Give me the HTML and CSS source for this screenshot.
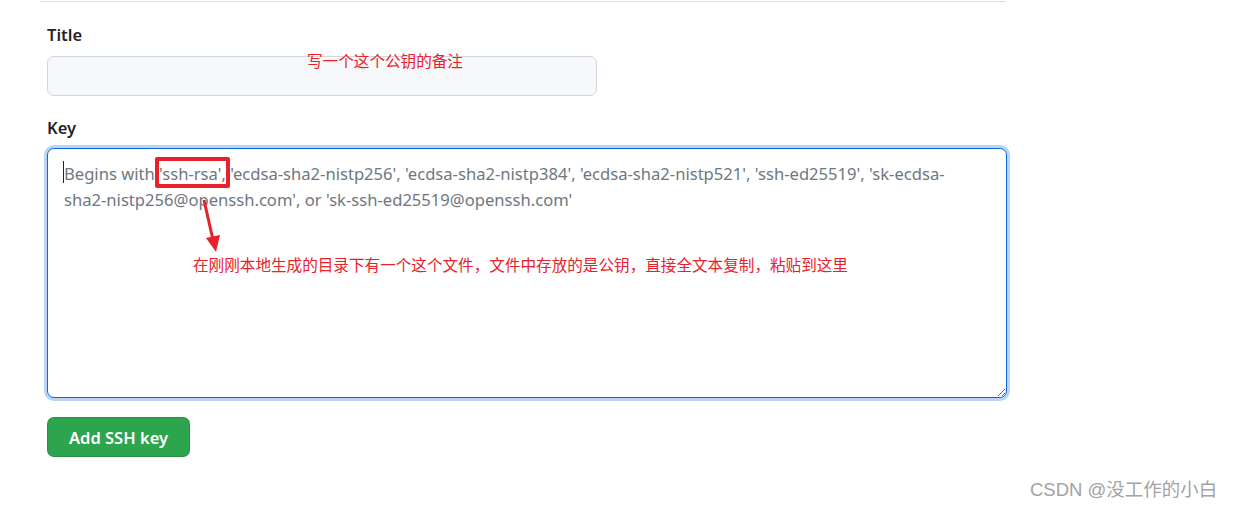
FILE: index.html
```html
<!DOCTYPE html>
<html lang="zh-CN">
<head>
<meta charset="utf-8">
<title>Add SSH key</title>
<link rel="stylesheet" href="styles.css">
</head>
<body>
<div class="wrap">
  <form class="form">
    <div class="group group-title">
      <label class="label" for="title">Title</label>
      <input class="input" id="title" type="text">
      <span class="note note-title">写一个这个公钥的备注</span>
    </div>
    <div class="group group-key">
      <label class="label" for="key">Key</label>
      <div class="area-wrap">
        <textarea class="area" id="key" placeholder="Begins with 'ssh-rsa', 'ecdsa-sha2-nistp256', 'ecdsa-sha2-nistp384', 'ecdsa-sha2-nistp521', 'ssh-ed25519', 'sk-ecdsa-sha2-nistp256@openssh.com', or 'sk-ssh-ed25519@openssh.com'"></textarea>
        <span class="caret"></span>
        <span class="mark-box"></span>
        <svg class="arrow" width="30" height="60" viewBox="0 0 30 60">
          <line x1="6" y1="2" x2="15" y2="42" stroke="#e8212a" stroke-width="3"/>
          <polygon points="8,40 22,37 18,54" fill="#e8212a"/>
        </svg>
        <span class="note note-key">在刚刚本地生成的目录下有一个这个文件，文件中存放的是公钥，直接全文本复制，粘贴到这里</span>
      </div>
    </div>
    <button class="btn" type="button">Add SSH key</button>
  </form>
</div>
<div class="watermark">CSDN @没工作的小白</div>
</body>
</html>
```

FILE: styles.css
```css
html, body {
  margin: 0;
  padding: 0;
  background: #ffffff;
}
body {
  font-family: "Noto Sans", "Liberation Sans", "Noto Sans CJK SC", sans-serif;
  color: #1f2328;
  width: 1233px;
  height: 505px;
  overflow: hidden;
  position: relative;
}
.wrap {
  margin: 1px 0 0 40px;
  width: 966px;
  border-top: 1px solid #d8dee4;
}
.form {
  padding-left: 7px;
  padding-top: 20px;
}
.group {
  position: relative;
}
.label {
  display: block;
  font-size: 16.5px;
  font-weight: 600;
  line-height: 25px;
  margin-bottom: 9px;
}
.input {
  display: block;
  box-sizing: border-box;
  width: 550px;
  height: 40px;
  background: #f6f8fa;
  border: 1px solid #d0d7de;
  border-radius: 7px;
  margin: 0;
  padding: 0 12px;
  font: inherit;
}
.group-key {
  margin-top: 19px;
}
.group-key .label {
  margin-bottom: 8px;
}
.area-wrap {
  position: relative;
  width: 960px;
}
.area {
  display: block;
  box-sizing: border-box;
  width: 960px;
  height: 250px;
  margin: 0;
  border: 1px solid #0969da;
  border-radius: 7px;
  box-shadow: 0 0 0 3px #b9d4f6;
  padding: 12px 36px 12px 16px;
  font-family: "Noto Sans", "Liberation Sans", sans-serif;
  font-size: 16.6px;
  line-height: 26px;
  color: #1f2328;
  outline: none;
  resize: vertical;
}
.area::placeholder {
  color: #6e7781;
  opacity: 1;
}
.caret {
  position: absolute;
  left: 16px;
  top: 13px;
  width: 1px;
  height: 22px;
  background: #1f2328;
}
.mark-box {
  position: absolute;
  left: 108px;
  top: 9px;
  width: 67px;
  height: 23px;
  border: 4px solid #e8212a;
  border-radius: 2px;
}
.arrow {
  position: absolute;
  left: 151px;
  top: 50px;
}
.note {
  position: absolute;
  color: #e8212a;
  font-family: "Noto Sans CJK SC", sans-serif;
  font-size: 15.6px;
  line-height: 18px;
  white-space: nowrap;
}
.note-title {
  left: 260px;
  top: 29px;
}
.note-key {
  left: 146px;
  top: 107px;
}
.btn {
  display: block;
  margin-top: 19px;
  box-sizing: border-box;
  width: 143px;
  height: 40px;
  background: #2da44e;
  border: 1px solid rgba(27, 31, 36, 0.15);
  border-radius: 7px;
  color: #ffffff;
  font-family: "Noto Sans", "Liberation Sans", sans-serif;
  font-size: 16.5px;
  font-weight: 600;
  padding: 0;
}
.watermark {
  position: absolute;
  left: 1030px;
  top: 475px;
  font-family: "Liberation Sans", "Noto Sans CJK SC", sans-serif;
  font-size: 18.5px;
  color: #a3a3a3;
  white-space: nowrap;
}
```
